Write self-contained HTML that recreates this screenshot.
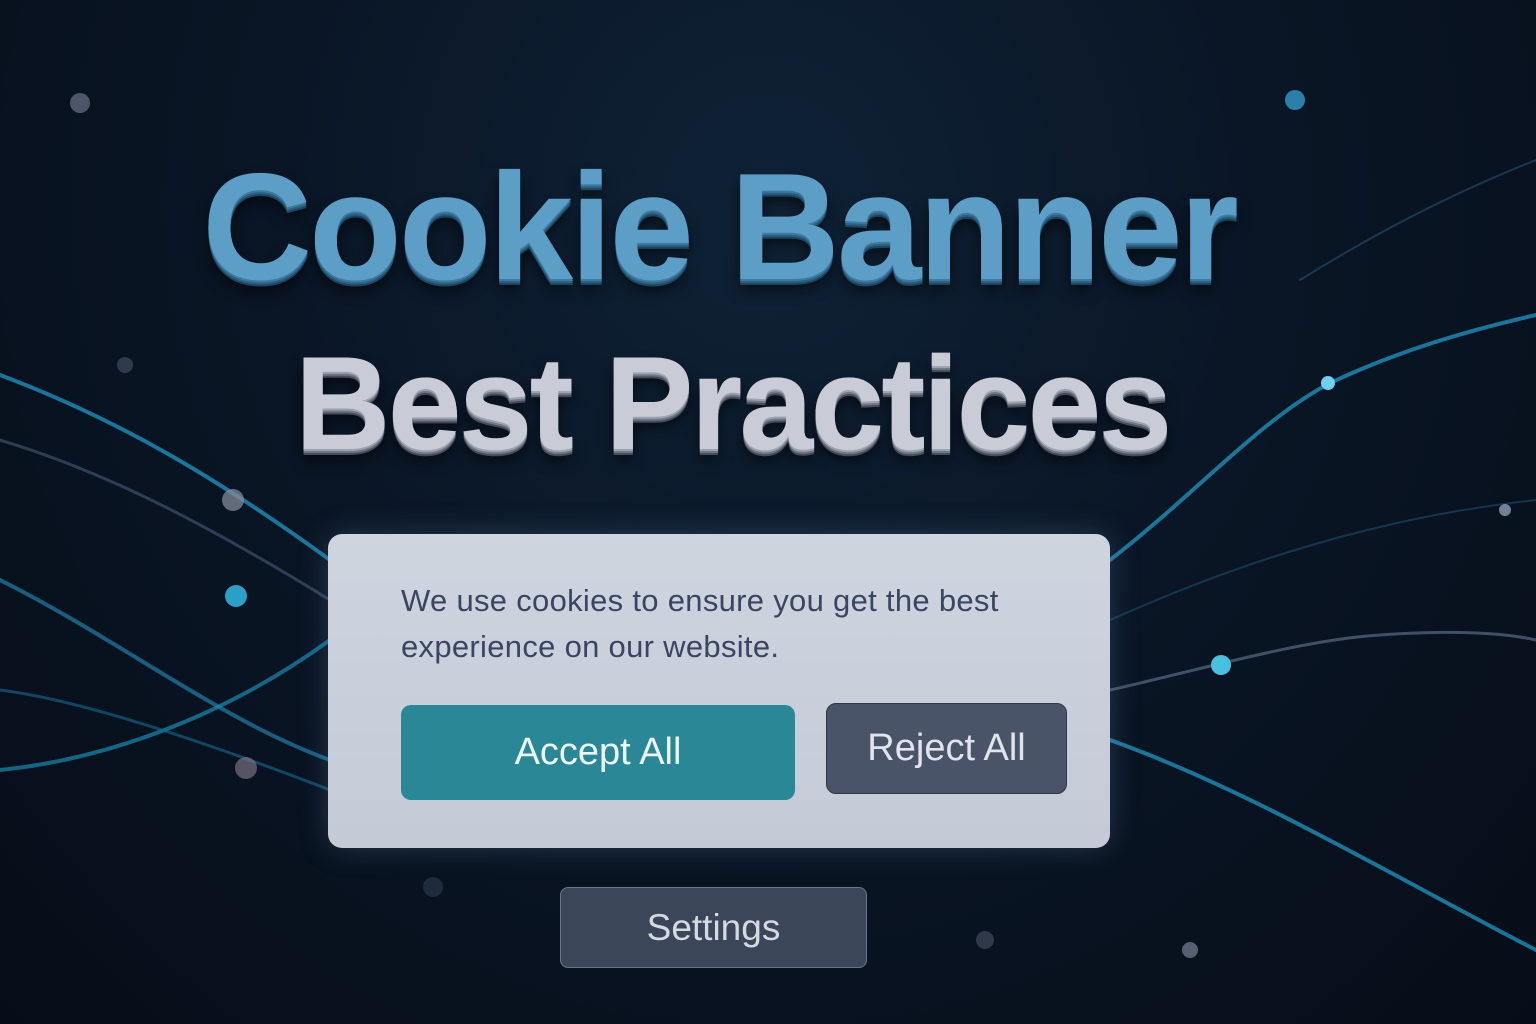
<!DOCTYPE html>
<html><head><meta charset="utf-8"><style>
html,body{margin:0;padding:0;}
body{width:1536px;height:1024px;overflow:hidden;position:relative;font-family:"Liberation Sans",sans-serif;
background:radial-gradient(ellipse at 50% 20%,#0f2236 0%,#0a1626 45%,#060d18 100%);}
svg.bg{position:absolute;left:0;top:0;}
.t1{position:absolute;left:-49px;width:1536px;text-align:center;top:140px;font-size:152px;font-weight:bold;color:#5d9ec7;letter-spacing:-3px;
text-shadow:0 2px 0 #3e7aa0,0 4px 0 #2d5f80,0 6px 0 #1e4560,0 10px 14px rgba(0,0,0,.6);}
.t2{position:absolute;left:-36px;width:1536px;text-align:center;top:328px;font-size:133px;font-weight:bold;color:#c9ccd6;letter-spacing:-3px;
text-shadow:0 2px 0 #9ca2b0,0 4px 0 #6f7686,0 6px 0 #454c5a,0 10px 14px rgba(0,0,0,.6);}
.card{position:absolute;left:328px;top:534px;width:782px;height:314px;border-radius:14px;
background:linear-gradient(180deg,#cfd5df,#c4cad6);box-shadow:0 0 30px rgba(120,160,200,.25);}
.txt{position:absolute;left:73px;top:44px;font-size:31px;line-height:46px;color:#3a4562;letter-spacing:0.3px;}
.btn{position:absolute;display:flex;align-items:center;justify-content:center;font-size:38px;border-radius:10px;}
.acc{left:73px;top:171px;width:394px;height:95px;background:#2a8896;color:#eef6f8;}
.rej{left:498px;top:169px;width:239px;height:89px;background:#4a5468;color:#e0e4ec;border:1px solid #2f3748;}
.set{position:absolute;left:560px;top:887px;width:305px;height:79px;border-radius:8px;background:#3b4659;border:1px solid #6a7688;
color:#d4d9e2;font-size:37px;display:flex;align-items:center;justify-content:center;}
</style></head><body>
<svg class="bg" width="1536" height="1024">
<g fill="none" stroke-linecap="round">
<path d="M0 375 C120 420 220 480 330 560" stroke="#1f8fb8" stroke-width="4" opacity=".8"/>
<path d="M0 580 C120 640 220 720 330 760" stroke="#1f7fa8" stroke-width="4" opacity=".7"/>
<path d="M0 770 C100 760 220 720 330 640" stroke="#1a8ab0" stroke-width="4" opacity=".7"/>
<path d="M0 690 C80 700 200 740 330 790" stroke="#176a90" stroke-width="3" opacity=".6"/>
<path d="M0 440 C100 470 200 520 330 600" stroke="#4a5a78" stroke-width="3" opacity=".6"/>
<path d="M1110 560 C1200 490 1260 420 1330 383 C1400 350 1470 330 1536 315" stroke="#1f8fb8" stroke-width="4" opacity=".8"/>
<path d="M1110 690 C1200 670 1300 640 1380 635 C1450 630 1500 632 1536 640" stroke="#5a6a88" stroke-width="3" opacity=".7"/>
<path d="M1110 740 C1250 790 1400 880 1536 950" stroke="#1f8fb8" stroke-width="4" opacity=".8"/>
<path d="M1110 620 C1200 580 1350 520 1536 500" stroke="#17506e" stroke-width="2" opacity=".6"/>
<path d="M1300 280 C1380 230 1460 190 1536 160" stroke="#1a3850" stroke-width="2"/>
</g>
<g>
<circle cx="236" cy="596" r="11" fill="#2aa0c8"/><circle cx="1328" cy="383" r="7" fill="#6fd0f0"/>
<circle cx="1221" cy="665" r="10" fill="#4ac0e0"/><circle cx="1295" cy="100" r="10" fill="#2a80a8"/>
<circle cx="80" cy="103" r="10" fill="#6a7488" opacity=".7"/><circle cx="233" cy="500" r="11" fill="#8a8ea0" opacity=".7"/>
<circle cx="246" cy="768" r="11" fill="#8a8090" opacity=".6"/><circle cx="125" cy="365" r="8" fill="#4a5468" opacity=".6"/>
<circle cx="1190" cy="950" r="8" fill="#8a94a8" opacity=".6"/><circle cx="985" cy="940" r="9" fill="#4a5468" opacity=".6"/>
<circle cx="1505" cy="510" r="6" fill="#a0b0c8" opacity=".7"/><circle cx="433" cy="887" r="10" fill="#2a3448" opacity=".7"/>
</g>
</svg>
<div class="t1">Cookie Banner</div>
<div class="t2">Best Practices</div>
<div class="card">
<div class="txt">We use cookies to ensure you get the best<br>experience on our website.</div>
<div class="btn acc">Accept All</div>
<div class="btn rej">Reject All</div>
</div>
<div class="set">Settings</div>
</body></html>
